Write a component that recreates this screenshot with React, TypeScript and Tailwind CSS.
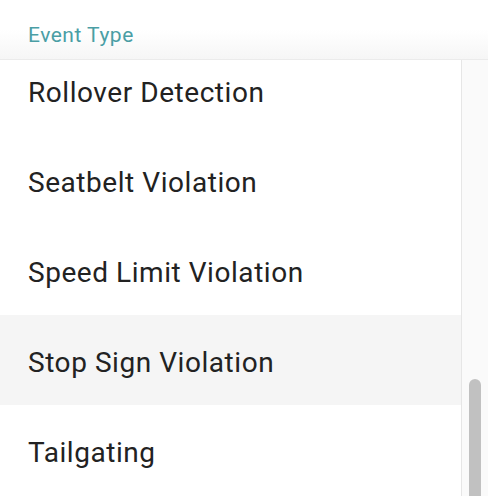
import React from "react";

const items = [
  "Rollover Detection",
  "Seatbelt Violation",
  "Speed Limit Violation",
  "Stop Sign Violation",
  "Tailgating",
];

export default function App() {
  return (
    <div
      className="w-[488px] h-[496px] overflow-hidden bg-white flex flex-col"
      style={{ fontFamily: "Roboto, 'Liberation Sans', sans-serif" }}
    >
      <div className="relative z-10 h-[60px] shrink-0 px-[28px] pt-[20px] bg-gradient-to-b from-white from-50% to-[#f6f6f6] border-b border-[#ebebeb]">
        <div className="text-[21px] leading-[30px] tracking-[0.5px] text-[#4a9ea5]">Event Type</div>
      </div>
      <div className="flex flex-1 min-h-0">
        <div className="flex-1 min-w-0 overflow-hidden">
          <div className="-mt-[15px] flex flex-col">
            {items.map((t) => (
              <div
                key={t}
                className={`h-[90px] flex items-center px-[28px] pt-[5px] text-[28px] tracking-[0.55px] text-[#222222] ${
                  t === "Stop Sign Violation" ? "bg-[#f5f5f5]" : ""
                }`}
              >
                {t}
              </div>
            ))}
          </div>
        </div>
        <div className="w-[27px] shrink-0 border-l border-[#e6e6e6] bg-[#fafafa] flex flex-col pt-[319px] px-[7px]">
          <div className="flex-1 rounded-t-full bg-[#c1c1c1]" />
        </div>
      </div>
    </div>
  );
}
